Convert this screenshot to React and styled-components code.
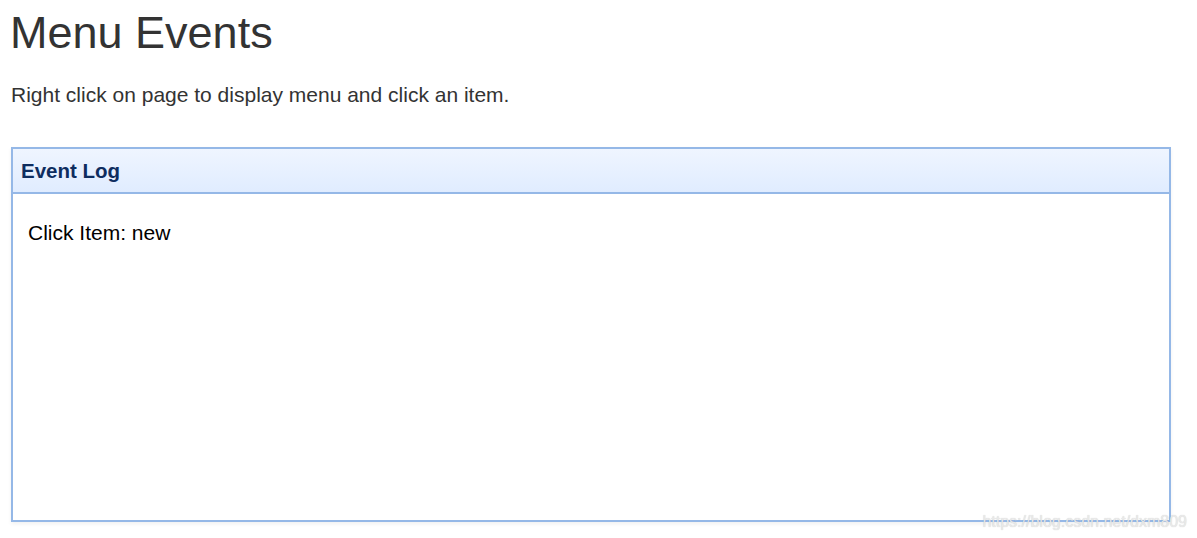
import React from "react";
import styled, { createGlobalStyle } from "styled-components";

const GlobalStyle = createGlobalStyle`
  html, body {
    margin: 0;
    padding: 0;
    background: #fff;
  }
  body {
    font-family: "Liberation Sans", Arial, sans-serif;
  }
`;

const Page = styled.div`
  position: relative;
  width: 1197px;
  height: 538px;
  padding: 7px 0 0 10px;
  box-sizing: border-box;
  overflow: hidden;
`;

const Title = styled.h1`
  margin: 0;
  font-size: 45px;
  font-weight: normal;
  line-height: 52px;
  color: #333;
`;

const Intro = styled.p`
  margin: 24px 0 0 1px;
  font-size: 21px;
  line-height: 24px;
  color: #333;
`;

const Panel = styled.div`
  margin: 40px 0 0 1px;
  width: 1160px;
  height: 375px;
  box-sizing: border-box;
  border: 2px solid #95b8e7;
  display: flex;
  flex-direction: column;
  box-shadow: 0 2px 4px rgba(0, 0, 0, 0.06);
`;

const PanelHeader = styled.div`
  height: 43px;
  flex-shrink: 0;
  display: flex;
  align-items: center;
  padding: 0 8px;
  background: linear-gradient(to bottom, #eff5ff 0%, #e0ecff 100%);
  border-bottom: 2px solid #95b8e7;
`;

const PanelTitle = styled.div`
  font-size: 20.5px;
  font-weight: bold;
  color: #0e2d5f;
`;

const PanelBody = styled.div`
  flex: 1;
  padding: 27px 15px;
  font-size: 21px;
  line-height: 24px;
  color: #000;
`;

const Watermark = styled.div`
  position: absolute;
  right: 10px;
  bottom: 7px;
  font-size: 16px;
  line-height: 18px;
  color: rgba(235, 235, 235, 0.95);
  text-shadow: 0 0 1px rgba(0, 0, 0, 0.2);
`;

export default function App() {
  return (
    <>
      <GlobalStyle />
      <Page>
        <Title>Menu Events</Title>
        <Intro>Right click on page to display menu and click an item.</Intro>
        <Panel>
          <PanelHeader>
            <PanelTitle>Event Log</PanelTitle>
          </PanelHeader>
          <PanelBody>Click Item: new</PanelBody>
        </Panel>
        <Watermark>https://blog.csdn.net/dxm809</Watermark>
      </Page>
    </>
  );
}
